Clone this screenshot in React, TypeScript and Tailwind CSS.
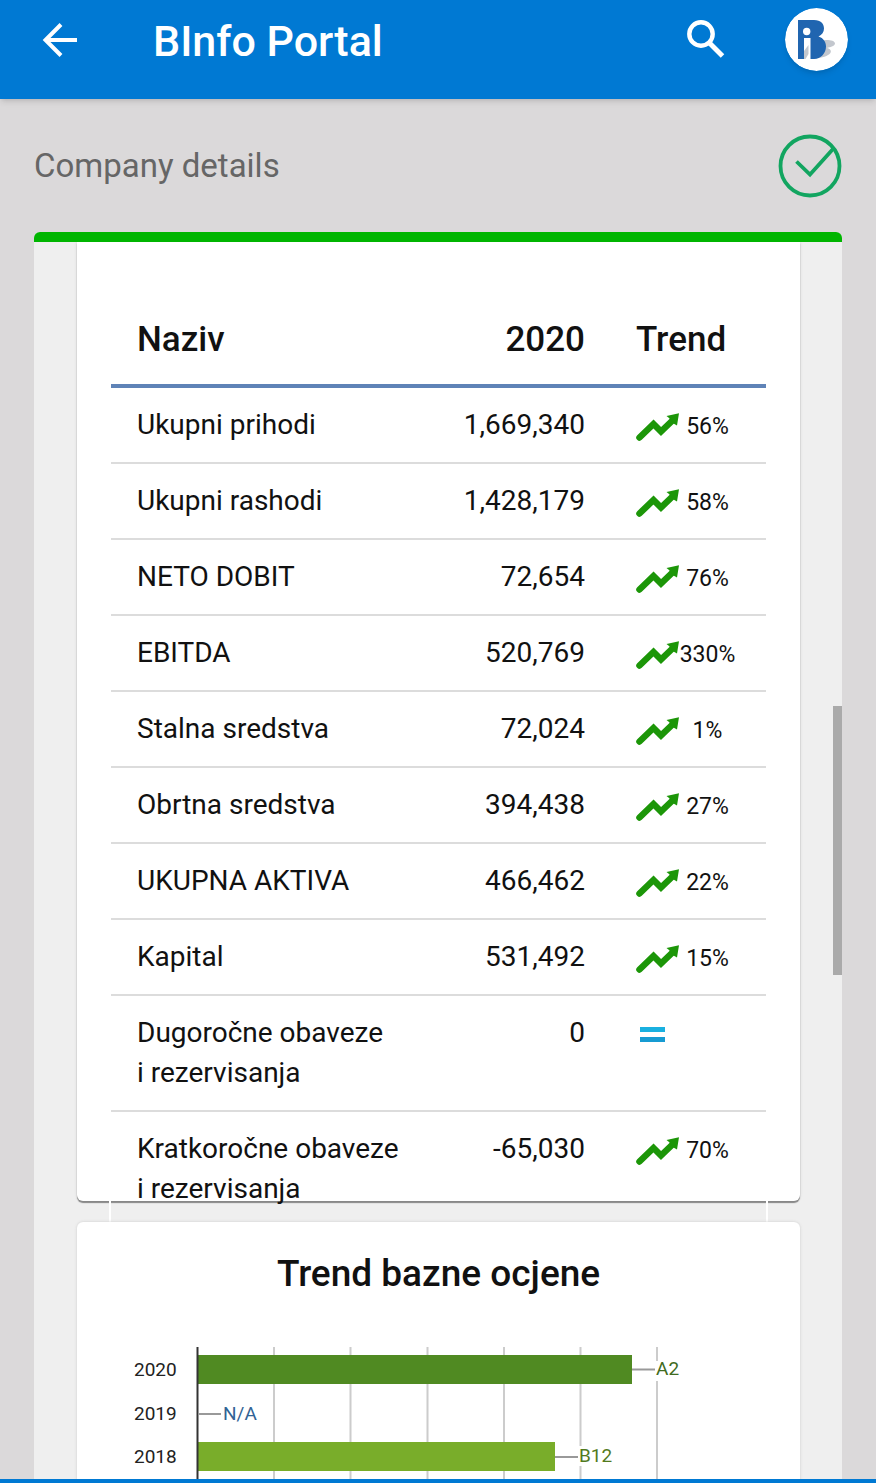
type Trend = "up" | "equal";

interface Row {
  name: string;
  value: string;
  trend: Trend;
  percent?: string;
}

const rows: Row[] = [
  { name: "Ukupni prihodi", value: "1,669,340", trend: "up", percent: "56%" },
  { name: "Ukupni rashodi", value: "1,428,179", trend: "up", percent: "58%" },
  { name: "NETO DOBIT", value: "72,654", trend: "up", percent: "76%" },
  { name: "EBITDA", value: "520,769", trend: "up", percent: "330%" },
  { name: "Stalna sredstva", value: "72,024", trend: "up", percent: "1%" },
  { name: "Obrtna sredstva", value: "394,438", trend: "up", percent: "27%" },
  { name: "UKUPNA AKTIVA", value: "466,462", trend: "up", percent: "22%" },
  { name: "Kapital", value: "531,492", trend: "up", percent: "15%" },
  { name: "Dugoročne obaveze i\u00a0rezervisanja", value: "0", trend: "equal" },
  { name: "Kratkoročne obaveze i\u00a0rezervisanja", value: "-65,030", trend: "up", percent: "70%" },
];

function BackIcon() {
  return (
    <svg viewBox="0 0 36 36" className="size-9" fill="none" stroke="#fff" strokeWidth="4" aria-hidden="true">
      <path d="M35 18H4M19 2.5 3.5 18 19 33.5" />
    </svg>
  );
}

function SearchIcon() {
  return (
    <svg viewBox="0 0 38 38" className="size-[38px]" fill="none" stroke="#fff" aria-hidden="true">
      <circle cx="14" cy="14" r="11.7" strokeWidth="4.4" />
      <path d="M22 22.500 35.500 36" strokeWidth="5" />
    </svg>
  );
}

function Logo() {
  return (
    <svg viewBox="0 0 63 63" className="size-[63px] rounded-full shadow-md" role="img" aria-label="BInfo">
      <circle cx="31.500" cy="31.500" r="31.500" fill="#fff" />
      <path
        d="M18 51C24 47 26 38 31 34C37 31 50 31 50 35.500C50 38 46 39 42 40C47 41 47 45 43 47C39 50 32 50 26 51Z"
        fill="#c3c7ce"
      />
      <path
        d="M13 12H29C36 12 39 16 39 20.500C39 24 37 27 33.500 28.500C38.500 30 41 34 41 38.500C41 45 36 51 29 51H13Z"
        fill="#2065b0"
      />
      <circle cx="21.700" cy="23.500" r="3.700" fill="#fff" />
      <path d="M19 30H25.500V51H19Z" fill="#fff" />
      <path d="M19 51V43L23.500 37V46L20.500 51Z" fill="#c3c7ce" />
    </svg>
  );
}

function CheckIcon() {
  return (
    <svg viewBox="0 0 64 64" className="size-16" fill="none" stroke="#12a560" strokeWidth="3.800" role="img" aria-label="Verified">
      <circle cx="32" cy="32" r="29.500" />
      <path d="M18.500 27.500 32 40.500 55 15" />
    </svg>
  );
}

function UpIcon() {
  return (
    <svg viewBox="0 0 43 28" className="h-7 w-[43px] shrink-0" role="img" aria-label="Up">
      <path d="M3.500 24.500 17.500 11 25 18.500 37 7" fill="none" stroke="#1c9608" strokeWidth="6.500" strokeLinecap="round" />
      <path d="M43 .3 30.500 3 33 5 37.500 10.500 41 12.500Z" fill="#1c9608" />
    </svg>
  );
}

function EqualIcon() {
  return (
    <svg viewBox="0 0 33 28" className="h-7 w-[33px]" role="img" aria-label="Unchanged">
      <path d="M4 6H29V11H4Z" fill="#19b0e0" />
      <path d="M4 16H29V21H4Z" fill="#179bd2" />
    </svg>
  );
}

function RatingChart() {
  return (
    <svg viewBox="0 0 723 136" className="block w-full font-['Roboto',sans-serif] text-[19px]" role="img" aria-label="Trend bazne ocjene">
      <path d="M197 0V136M273.500 0V136M350.500 0V136M427 0V136M503.500 0V136M580 0V136" stroke="#ccc" strokeWidth="2" />
      <path d="M577 14H604V34H577ZM500 99H540V119H500Z" fill="#fff" />
      <path d="M120 8H555V37H120Z" fill="#508a22" />
      <path d="M120 95H478V124H120Z" fill="#79ad2a" />
      <path d="M120.500 0V136" stroke="#333" strokeWidth="2" />
      <path d="M555 22.500H578M121 67H144M478 110H501" stroke="#999" strokeWidth="2" />
      <g fill="#222">
        <text x="57" y="29">2020</text>
        <text x="57" y="73">2019</text>
        <text x="57" y="116">2018</text>
      </g>
      <text x="579" y="28" fill="#416b20">A2</text>
      <text x="146" y="73" fill="#316395">N/A</text>
      <text x="502" y="115" fill="#527a1d">B12</text>
    </svg>
  );
}

export default function App() {
  return (
    <div className="flex h-screen flex-col bg-[#dbd9da] font-['Roboto',sans-serif] text-[#111]">
      <header className="z-10 flex h-[99px] shrink-0 items-start bg-[#0079d3] pr-7 pl-[42px] text-white shadow-md">
        <button type="button" aria-label="Back" className="mt-[22px]">
          <BackIcon />
        </button>
        <h1 className="mt-4 ml-[75px] flex-1 text-[43px] leading-[50px] font-medium">BInfo Portal</h1>
        <button type="button" aria-label="Search" className="mt-5 mr-[60px]">
          <SearchIcon />
        </button>
        <button type="button" aria-label="Profile" className="mt-2">
          <Logo />
        </button>
      </header>

      <main className="flex min-h-0 flex-1 flex-col px-[34px]">
        <div className="flex h-[133px] shrink-0 items-center justify-between">
          <h2 className="text-[33px] leading-10 text-[#666]">Company details</h2>
          <CheckIcon />
        </div>

        <section className="relative flex min-h-0 flex-1 flex-col overflow-hidden rounded-t-md bg-[#efefef]">
          <div className="h-[10px] shrink-0 bg-[#00b500]" />
          <div className="min-h-0 flex-1 overflow-y-auto pr-[42px] pl-[43px] [scrollbar-width:none]">
            <div className="flow-root rounded-b-md bg-white px-8 shadow-[0_2px_1px_#888,0_0_3px_#ccc]">
              <div className="-mb-[27px] border-x-2 border-white">
                <table className="w-full border-collapse text-[28px] leading-10">
                  <thead>
                    <tr className="h-[144px] border-b-4 border-[#5f83b7] text-[35px]">
                      <th scope="col" className="pt-[54px] pl-[26px] text-left font-medium">Naziv</th>
                      <th scope="col" className="pt-[54px] pr-[51px] text-right font-medium">2020</th>
                      <th scope="col" className="w-[130px] pt-[54px] text-left font-medium">Trend</th>
                    </tr>
                  </thead>
                  <tbody>
                    {rows.map((row) => (
                      <tr key={row.name} className="border-b-2 border-[#dcdcdc] align-top last:border-white">
                        <td className="pt-[17px] pb-[17px] pl-[26px]">
                          <div className="max-w-[270px]">{row.name}</div>
                        </td>
                        <td className="pt-[17px] pr-[51px] text-right">{row.value}</td>
                        <td className="pt-[17px]">
                          <div className="flex h-11 items-center">
                            {row.trend === "up" ? <UpIcon /> : <EqualIcon />}
                            {row.percent && <span className="w-[57px] text-center text-[23px]">{row.percent}</span>}
                          </div>
                        </td>
                      </tr>
                    ))}
                  </tbody>
                </table>
              </div>
            </div>

            <div className="relative mt-[21px] rounded-t-md bg-white pt-8 shadow-[0_0_3px_#ccc]">
              <h3 className="mb-[53px] text-center text-[37px] leading-10 font-medium">Trend bazne ocjene</h3>
              <RatingChart />
            </div>
          </div>
          <div className="absolute top-[38%] right-0 h-[269px] w-[9px] bg-[#aaa]" />
        </section>
      </main>
      <footer className="h-1 shrink-0 bg-[#0079d3]" />
    </div>
  );
}
